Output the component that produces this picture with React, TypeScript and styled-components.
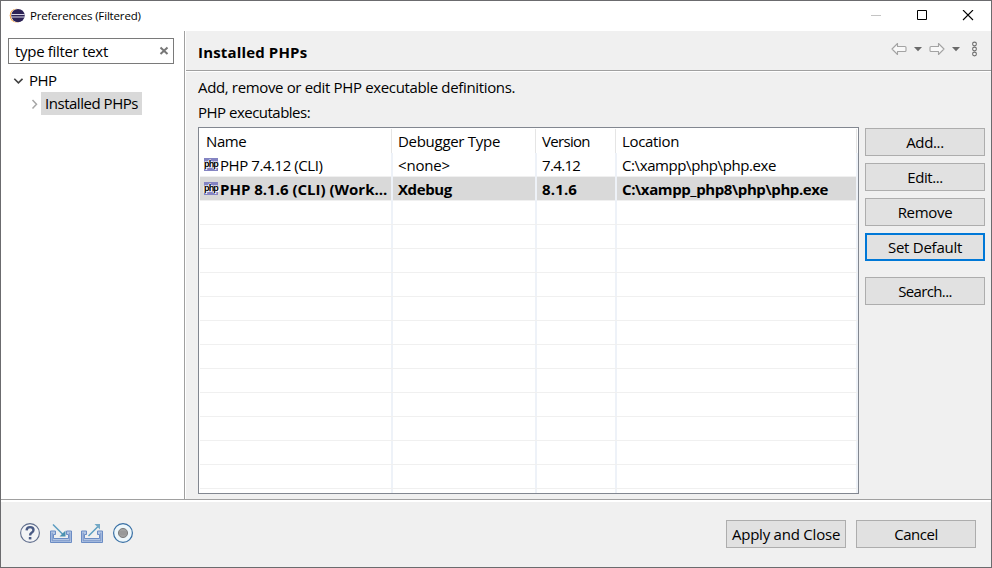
import React from 'react';
import styled, { createGlobalStyle, css } from 'styled-components';

const GlobalStyle = createGlobalStyle`
  * { box-sizing: border-box; }
  html, body, #root { height: 100%; }
  body {
    margin: 0;
    background: #f0f0f0;
    color: #000;
    font: 15px/20px "Open Sans", "Noto Sans", sans-serif;
    overflow: hidden;
  }
`;

const Window = styled.div`
  display: flex;
  flex-direction: column;
  width: 992px;
  height: 568px;
  border: 1px solid #6b6b6e;
  background: #f0f0f0;
`;

const Label = styled.span<{ $ls?: number; $bold?: boolean }>`
  white-space: pre;
  letter-spacing: ${(p) => p.$ls ?? -0.3}px;
  font-weight: ${(p) => (p.$bold ? 700 : 400)};
`;

const TitleBar = styled.header`
  display: flex;
  align-items: center;
  height: 30px;
  flex: none;
  padding: 0 17px 0 8px;
  background: #fff;
`;

const TitleText = styled(Label)`
  flex: 1;
  margin-left: 5px;
  font-size: 11.5px;
  line-height: 30px;
`;

const WindowControls = styled.div`
  display: flex;
  gap: 34px;
`;

const Body = styled.div`
  display: flex;
  height: 468px;
  flex: none;
`;

const Sidebar = styled.nav`
  width: 184px;
  flex: none;
  padding: 7px 10px 0 7px;
  background: #fff;
  border-right: 1px solid #a0a0a0;
`;

const FilterBox = styled.div`
  display: flex;
  align-items: center;
  justify-content: space-between;
  width: 166px;
  height: 26px;
  padding: 0 4px 0 6px;
  border: 1px solid #7a7a7a;
  background: #fff;
`;

const Tree = styled.div`
  padding: 4px 0 0 4px;
`;

const TreeItem = styled.div<{ $level: number }>`
  display: flex;
  align-items: center;
  height: ${(p) => (p.$level ? 22 : 24)}px;
  padding-left: ${(p) => p.$level * 16}px;
`;

const TreeLabel = styled.div<{ $selected?: boolean }>`
  height: 23px;
  line-height: 23px;
  margin-left: 2px;
  padding: 0 4px;
  background: ${(p) => (p.$selected ? '#d9d9d9' : 'transparent')};
`;

const Page = styled.main`
  flex: 1;
  min-width: 0;
  border-left: 1px solid #fff;
`;

const PageHeader = styled.div`
  display: flex;
  align-items: center;
  justify-content: space-between;
  height: 41px;
  padding: 0 12px 0 12px;
  border-bottom: 1px solid #fff;
  box-shadow: inset 0 -1px #a0a0a0;
`;

const HeaderTitle = styled(Label)`
  padding-top: 1px;
`;

const HistoryTools = styled.div`
  display: flex;
  align-items: center;
  height: 18px;
  margin-bottom: 4px;
`;

const Description = styled.div`
  height: 25px;
  padding-left: 12px;
  line-height: 25px;
`;

const Intro = styled.div`
  height: 55px;
  padding-top: 3px;
`;

const Workspace = styled.div`
  display: flex;
  gap: 6px;
  padding-left: 12px;
`;

const Table = styled.div`
  display: flex;
  flex-direction: column;
  width: 661px;
  height: 367px;
  flex: none;
  border: 1px solid #828790;
  background: #fff;
`;

const columns = css`
  display: grid;
  grid-template-columns: 194px 144px 80px 241px;
  height: 24px;
  flex: none;
`;

const HeaderRow = styled.div`
  ${columns}
  height: 25px;
  padding-top: 1px;
`;

const HeaderCell = styled.div<{ $first?: boolean }>`
  padding-left: ${(p) => (p.$first ? 7 : 5)}px;
  margin-right: 1px;
  line-height: 25px;
  border-right: 1px solid #e5e5e5;
`;

const DataRow = styled.div<{ $selected?: boolean }>`
  ${columns}
  margin-left: 1px;
  grid-template-columns: 193px 144px 80px 241px;
  background: ${(p) => (p.$selected ? '#d9d9d9' : '#fff')};
  border-bottom: 1px solid #f0f0f0;
`;

const DataCell = styled.div<{ $first?: boolean }>`
  display: flex;
  align-items: center;
  min-width: 0;
  padding-left: ${(p) => (p.$first ? 4 : 5)}px;
  gap: 2px;
  line-height: 24px;
  border-right: 2px solid #eef2f8;
`;

const TableTail = styled(DataRow)`
  flex: 1;
  height: auto;
  border-bottom: 0;
`;

const ActionColumn = styled.div`
  display: flex;
  flex-direction: column;
  gap: 7px;
  padding-top: 1px;
`;

const Button = styled.button<{ $focused?: boolean; $spaced?: boolean }>`
  display: flex;
  align-items: center;
  justify-content: center;
  width: 120px;
  height: 28px;
  margin: ${(p) => (p.$spaced ? '9px 0 0' : 0)};
  padding: 0;
  border: ${(p) => (p.$focused ? '2px solid #0078d7' : '1px solid #adadad')};
  background: #e1e1e1;
  color: #000;
  font: inherit;
`;

const Footer = styled.footer`
  display: flex;
  flex: 1;
  align-items: flex-start;
  justify-content: space-between;
  padding: 19px 15px 0 18px;
  border-top: 1px solid #a0a0a0;
  box-shadow: inset 0 2px #fff;
`;

const FooterIcons = styled.div`
  display: flex;
  gap: 9px;
  padding-top: 3px;
`;

const FooterButtons = styled.div`
  display: flex;
  gap: 10px;
  padding-top: 1px;
`;

const Icon = styled.svg`
  display: block;
  flex: none;
`;

const EclipseLogo = () => (
  <Icon width="16" height="16" viewBox="0 0 16 16">
    <circle cx="7.5" cy="7.6" r="6.8" fill="#f7941e" />
    <circle cx="8.5" cy="7.6" r="6.9" fill="#fff" />
    <circle cx="9" cy="7.6" r="6.7" fill="#2c2255" />
    <path d="M2.4 6.5h13.2M2.4 9h13.2" stroke="#d8d5e6" strokeWidth="1.1" />
  </Icon>
);

const Minimize = () => (
  <Icon width="12" height="12" viewBox="0 0 12 12">
    <path d="M1 5.5h10" stroke="#c4c4c4" />
  </Icon>
);

const Maximize = () => (
  <Icon width="12" height="12" viewBox="0 0 12 12">
    <path d="M1.5 0.5h9v9h-9z" fill="none" stroke="#000" />
  </Icon>
);

const Close = () => (
  <Icon width="12" height="12" viewBox="0 0 12 12">
    <path d="M1 0l10 10M11 0L1 10" stroke="#000" strokeWidth="1.1" />
  </Icon>
);

const ClearIcon = () => (
  <Icon width="10" height="10" viewBox="0 0 10 10">
    <path d="M1.5 1.5l7 6.5M8.5 1.5l-7 6.5" stroke="#777" strokeWidth="2" />
  </Icon>
);

const Chevron = ({ open }: { open?: boolean }) => (
  <Icon width="11" height="11" viewBox="0 0 11 11">
    {open ? (
      <path d="M2.3 3.8l4.1 4 4.1-4" fill="none" stroke="#404040" strokeWidth="1.6" />
    ) : (
      <path d="M4.5 2l4 4.2-4 4.2" fill="none" stroke="#a6a6a6" strokeWidth="1.5" />
    )}
  </Icon>
);

const HistoryArrow = ({ forward }: { forward?: boolean }) => (
  <Icon width="16" height="14" viewBox="0 0 16 14">
    <path
      d="M1 7l5.5-5.5v3h7.5q1 0 1 1v3q0 1-1 1H6.5v3z"
      transform={forward ? 'matrix(-1 0 0 1 16 0)' : undefined}
      fill="#f8f8f8"
      stroke="#a3a3a3"
      strokeWidth="1.1"
      strokeLinejoin="round"
    />
  </Icon>
);

const DropArrow = () => (
  <Icon width="22" height="14" viewBox="0 0 22 14">
    <path d="M7 5h8l-4 4.2z" fill="#6a6a6a" />
  </Icon>
);

const ViewMenu = () => (
  <Icon width="10" height="16" viewBox="0 0 10 16">
    <g fill="#f6f6f6" stroke="#6e6e6e" strokeWidth="1.1">
      <circle cx="5.5" cy="3" r="1.9" />
      <circle cx="5.5" cy="8" r="1.9" />
      <circle cx="5.5" cy="13" r="1.9" />
    </g>
  </Icon>
);

const PhpTag = styled.span`
  display: flex;
  align-items: center;
  justify-content: center;
  width: 14px;
  height: 13px;
  margin-bottom: 2px;
  flex: none;
  background: #8484c2;
  color: #000;
  font: bold 9px/12px "Liberation Sans", sans-serif;
  letter-spacing: -0.8px;
  text-shadow: 1px 1px #fff, -1px 0 #fff, 0 -1px #d8d8ee;
`;

const Help = () => (
  <Icon width="22" height="22" viewBox="0 0 22 22">
    <circle cx="11" cy="11" r="9.4" fill="#f3f4f6" stroke="#5f6d8c" strokeWidth="1.1" />
    <path d="M7.6 8.4q.2-3.3 3.5-3.3 3.4 0 3.4 2.9 0 1.6-1.9 2.8-1.5 1-1.5 2.7" fill="none" stroke="#4a5b85" strokeWidth="2.4" />
    <path d="M9.8 15h2.6v2.4H9.8z" fill="#4a5b85" />
  </Icon>
);

const Tray = ({ exporting }: { exporting?: boolean }) => (
  <Icon width="22" height="22" viewBox="0 0 22 22">
    <path d="M5.5 9H0.5v11.5h21V9H16.5v3.5h2v4H3.5v-4h2z" fill="#b4c6e4" stroke="#6b8cc4" strokeWidth="1" />
    <path d="M2.2 10.7v8.1h17.6v-8.1" fill="none" stroke="#7593c8" />
    {exporting ? (
      <>
        <path d="M7.5 14L17 4.5" stroke="#5b9cc0" strokeWidth="1.5" />
        <path d="M13.5 2H19v5.5z" fill="#74a9c6" />
      </>
    ) : (
      <>
        <path d="M3 2.5L13.5 13" stroke="#5b9cc0" strokeWidth="1.5" />
        <path d="M15.5 8.5V14.5H9.5z" fill="#4b91b0" />
      </>
    )}
  </Icon>
);

const Record = () => (
  <Icon width="22" height="22" viewBox="0 0 22 22">
    <circle cx="11" cy="11" r="9.4" fill="#eef7fb" stroke="#386fa4" strokeWidth="1.2" />
    <circle cx="11" cy="11" r="4.6" fill="#a0a0a0" stroke="#777" strokeWidth="0.9" />
    <path d="M7 10h8M7 12h8" stroke="#8b8b8b" strokeWidth="0.6" />
  </Icon>
);

type Cell = [text: string, spacing: number];

const headings: Cell[] = [
  ['Name', -0.4],
  ['Debugger Type', -0.29],
  ['Version', -0.68],
  ['Location', -0.32],
];

const executables: { bold: boolean; cells: Cell[] }[] = [
  {
    bold: false,
    cells: [
      ['PHP 7.4.12 (CLI)', -0.44],
      ['<none>', -0.17],
      ['7.4.12', -0.65],
      ['C:\\xampp\\php\\php.exe', -0.4],
    ],
  },
  {
    bold: true,
    cells: [
      ['PHP 8.1.6 (CLI) (Work...', 0],
      ['Xdebug', -0.4],
      ['8.1.6', 0.15],
      ['C:\\xampp_php8\\php\\php.exe', -0.39],
    ],
  },
];

const emptyRows = Array.from({ length: 12 }, (_, i) => i);
const columnKeys = [0, 1, 2, 3];

export default function App() {
  return (
    <Window>
      <GlobalStyle />
      <TitleBar>
        <EclipseLogo />
        <TitleText $ls={-0.16}>Preferences (Filtered)</TitleText>
        <WindowControls>
          <Minimize />
          <Maximize />
          <Close />
        </WindowControls>
      </TitleBar>
      <Body>
        <Sidebar>
          <FilterBox>
            <Label $ls={-0.3}>type filter text</Label>
            <ClearIcon />
          </FilterBox>
          <Tree>
            <TreeItem $level={0}>
              <Chevron open />
              <TreeLabel>
                <Label $ls={-0.6}>PHP</Label>
              </TreeLabel>
            </TreeItem>
            <TreeItem $level={1}>
              <Chevron />
              <TreeLabel $selected>
                <Label $ls={-0.47}>Installed PHPs</Label>
              </TreeLabel>
            </TreeItem>
          </Tree>
        </Sidebar>
        <Page>
          <PageHeader>
            <HeaderTitle $bold $ls={0.16}>Installed PHPs</HeaderTitle>
            <HistoryTools>
              <HistoryArrow />
              <DropArrow />
              <HistoryArrow forward />
              <DropArrow />
              <Icon width="2" height="16" />
              <ViewMenu />
            </HistoryTools>
          </PageHeader>
          <Intro>
            <Description>
              <Label $ls={-0.35}>Add, remove or edit PHP executable definitions.</Label>
            </Description>
            <Description>
              <Label $ls={-0.51}>PHP executables:</Label>
            </Description>
          </Intro>
          <Workspace>
            <Table>
              <HeaderRow>
                {headings.map(([text, ls], i) => (
                  <HeaderCell key={text} $first={i === 0}>
                    <Label $ls={ls}>{text}</Label>
                  </HeaderCell>
                ))}
              </HeaderRow>
              {executables.map((row) => (
                <DataRow key={row.cells[0][0]} $selected={row.bold}>
                  {row.cells.map(([text, ls], i) => (
                    <DataCell key={text} $first={i === 0}>
                      {i === 0 && <PhpTag>php</PhpTag>}
                      <Label $ls={ls} $bold={row.bold}>{text}</Label>
                    </DataCell>
                  ))}
                </DataRow>
              ))}
              {emptyRows.map((row) => (
                <DataRow key={row}>
                  {columnKeys.map((c) => <DataCell key={c} />)}
                </DataRow>
              ))}
              <TableTail>
                {columnKeys.map((c) => <DataCell key={c} />)}
              </TableTail>
            </Table>
            <ActionColumn>
              <Button><Label $ls={-0.35}>Add...</Label></Button>
              <Button><Label $ls={-0.45}>Edit...</Label></Button>
              <Button><Label $ls={-0.3}>Remove</Label></Button>
              <Button $focused><Label $ls={-0.25}>Set Default</Label></Button>
              <Button $spaced><Label $ls={-0.65}>Search...</Label></Button>
            </ActionColumn>
          </Workspace>
        </Page>
      </Body>
      <Footer>
        <FooterIcons>
          <Help />
          <Tray />
          <Tray exporting />
          <Record />
        </FooterIcons>
        <FooterButtons>
          <Button><Label $ls={-0.22}>Apply and Close</Label></Button>
          <Button><Label $ls={-0.5}>Cancel</Label></Button>
        </FooterButtons>
      </Footer>
    </Window>
  );
}
